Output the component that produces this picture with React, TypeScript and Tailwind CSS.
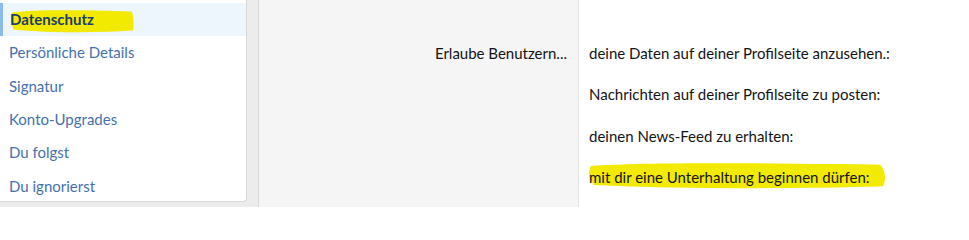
const nav = ["Persönliche Details", "Signatur", "Konto-Upgrades", "Du folgst", "Du ignorierst"];

const options = [
  "deine Daten auf deiner Profilseite anzusehen.:",
  "Nachrichten auf deiner Profilseite zu posten:",
  "deinen News-Feed zu erhalten:",
];

function Marker({ className }: { className: string }) {
  return (
    <svg className={className} viewBox="0 0 100 20" preserveAspectRatio="none" aria-hidden="true">
      <path d="M1 3 C 20 0, 60 1, 98 2 C 100 6, 100 14, 99 18 C 70 20, 30 20, 2 17 C 0 12, 0 7, 1 3 Z" fill="#f2ea00" />
    </svg>
  );
}

export default function App() {
  return (
    <div className="flex h-[207px] w-full overflow-hidden bg-[#ececec] font-['Segoe_UI','Lato',sans-serif] text-[15px]">
      <aside className="h-[202px] w-[247px] shrink-0 rounded-br-[4px] border-r border-b border-[#d8d8d8] bg-white pt-[3px]">
        <div className="relative flex h-[33px] items-center border-l-[3px] border-[#8bbbe8] bg-[#edf5fd] pl-[7px]">
          <Marker className="absolute top-[6px] left-[8px] h-[24px] w-[123px]" />
          <span className="relative font-bold text-[#1d3d6b]">Datenschutz</span>
        </div>
        {nav.map((n) => (
          <div key={n} className="flex h-[33.3px] items-center pl-[9px] text-[#4471ad]">
            {n}
          </div>
        ))}
      </aside>
      <main className="ml-[11px] flex flex-1 border-l border-[#dadada] bg-white text-[#141414]">
        <div className="w-[320px] shrink-0 border-r border-[#e2e2e2] bg-[#f5f5f5] pt-[42px] pr-[11px] text-right">
          Erlaube Benutzern...
        </div>
        <div className="flex flex-col pt-[42px] pl-[10px]">
          {options.map((o) => (
            <div key={o} className="h-[41.5px]">{o}</div>
          ))}
          <div className="relative h-[41.5px]">
            <Marker className="absolute top-[-4px] left-[-1px] h-[27px] w-[298px]" />
            <span className="relative">mit dir eine Unterhaltung beginnen dürfen:</span>
          </div>
        </div>
      </main>
    </div>
  );
}
